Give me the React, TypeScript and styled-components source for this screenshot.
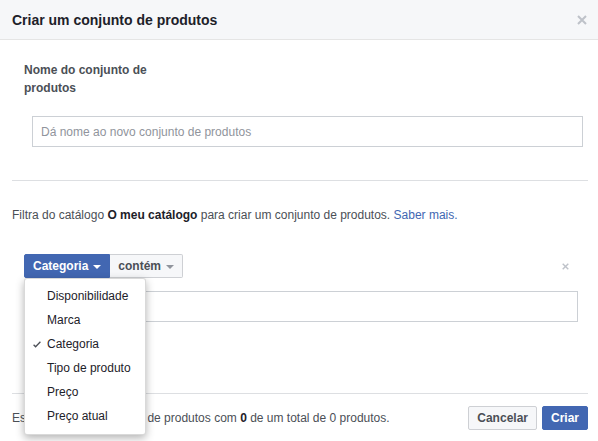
import styled, { createGlobalStyle } from "styled-components";

const Global = createGlobalStyle`
  body {
    margin: 0;
    background: #fff;
    font-family: "Liberation Sans", Arial, Helvetica, sans-serif;
    color: #1d2129;
  }
`;

const Dialog = styled.div`
  width: 598px;
  height: 441px;
  background: #fff;
  overflow: hidden;
`;

const Header = styled.div`
  height: 39px;
  display: flex;
  align-items: center;
  justify-content: space-between;
  padding: 0 11px 0 12px;
  background: #f6f7f9;
  border-bottom: 1px solid #e5e5e5;
`;

const Title = styled.h1`
  margin: 0;
  font-size: 14px;
  font-weight: bold;
  color: #1d2129;
`;

const CloseBtn = styled.button<{ $size: number }>`
  border: 0;
  background: none;
  padding: 0;
  display: flex;
  cursor: pointer;
  color: #bec2c9;
  svg {
    width: ${(p) => p.$size}px;
    height: ${(p) => p.$size}px;
  }
`;

const Content = styled.div`
  padding: 0 10px 0 12px;
`;

const NameBlock = styled.div`
  padding: 21px 0 33px 12px;
  border-bottom: 1px solid #dddfe2;
`;

const Label = styled.label`
  display: block;
  width: 150px;
  font-size: 12px;
  line-height: 18px;
  font-weight: bold;
  color: #4b4f56;
`;

const TextInput = styled.input<{ $indent: number }>`
  display: block;
  box-sizing: border-box;
  height: 31px;
  margin-left: ${(p) => p.$indent}px;
  padding: 0 8px;
  border: 1px solid #ccd0d5;
  font-family: inherit;
  font-size: 12px;
  color: #1d2129;
  outline: none;
  &::placeholder {
    color: #90949c;
  }
`;

const NameInput = styled(TextInput)`
  margin-top: 19px;
  width: 551px;
`;

const FilterBlock = styled.div`
  padding: 26px 0 0;
  height: 213px;
  box-sizing: border-box;
  border-bottom: 1px solid #dddfe2;
`;

const Intro = styled.p`
  margin: 0;
  font-size: 12px;
  line-height: 16px;
  color: #4b4f56;
  b {
    color: #1d2129;
  }
  a {
    color: #4267b2;
    text-decoration: none;
  }
`;

const FilterRow = styled.div`
  margin-top: 31px;
  padding-left: 12px;
  padding-right: 19px;
  display: flex;
  align-items: center;
  justify-content: space-between;
`;

const ButtonGroup = styled.div`
  position: relative;
  display: flex;
`;

const Button = styled.button<{ $primary?: boolean }>`
  box-sizing: border-box;
  height: 24px;
  display: inline-flex;
  align-items: center;
  gap: 5px;
  padding: 0 8px;
  border: 1px solid ${(p) => (p.$primary ? "#4267b2" : "#ced0d4")};
  border-radius: 2px;
  background: ${(p) => (p.$primary ? "#4267b2" : "#f6f7f9")};
  color: ${(p) => (p.$primary ? "#fff" : "#4b4f56")};
  font-family: inherit;
  font-size: 12px;
  font-weight: bold;
  cursor: pointer;
`;

const SegLeft = styled(Button)`
  border-radius: 2px 0 0 2px;
`;

const SegRight = styled(Button)`
  border-left: 0;
  border-radius: 0 2px 2px 0;
`;

const Caret = styled.span<{ $color: string }>`
  width: 0;
  height: 0;
  border-left: 4px solid transparent;
  border-right: 4px solid transparent;
  border-top: 4px solid ${(p) => p.$color};
  margin-top: 1px;
`;

const Menu = styled.ul`
  position: absolute;
  top: 24px;
  left: 0;
  z-index: 10;
  width: 122px;
  box-sizing: border-box;
  margin: 0;
  padding: 5px 0 6px;
  list-style: none;
  background: #fff;
  border: 1px solid rgba(0, 0, 0, 0.15);
  border-radius: 3px;
  box-shadow: 0 3px 8px rgba(0, 0, 0, 0.3);
`;

const MenuItem = styled.li`
  position: relative;
  height: 24px;
  line-height: 24px;
  padding-left: 22px;
  font-size: 12px;
  color: #1d2129;
  white-space: nowrap;
  svg {
    position: absolute;
    left: 8px;
    top: 9px;
  }
`;

const ValueInput = styled(TextInput)`
  margin-top: 13px;
  width: 554px;
`;

const Footer = styled.div`
  display: flex;
  align-items: center;
  justify-content: space-between;
  padding: 12px 10px 0 12px;
`;

const Summary = styled.p`
  margin: 0;
  font-size: 12px;
  color: #4b4f56;
  white-space: nowrap;
  b {
    color: #1d2129;
  }
`;

const Actions = styled.div`
  display: flex;
  gap: 5px;
`;

const XIcon = () => (
  <svg viewBox="0 0 10 10" fill="none" stroke="currentColor" strokeWidth="2">
    <path d="M1 1l8 8M9 1l-8 8" />
  </svg>
);

const Check = () => (
  <svg width="8" height="7" viewBox="0 0 8 7" fill="none" stroke="#4b4f56" strokeWidth="1.3">
    <path d="M0.6 3.8l2 2L7.4 0.8" />
  </svg>
);

const options = [
  "Disponibilidade",
  "Marca",
  "Categoria",
  "Tipo de produto",
  "Preço",
  "Preço atual",
];

export default function App() {
  return (
    <Dialog>
      <Global />
      <Header>
        <Title>Criar um conjunto de produtos</Title>
        <CloseBtn $size={10}>
          <XIcon />
        </CloseBtn>
      </Header>

      <Content>
        <NameBlock>
          <Label htmlFor="setName">Nome do conjunto de produtos</Label>
          <NameInput
            id="setName"
            $indent={8}
            placeholder="Dá nome ao novo conjunto de produtos"
          />
        </NameBlock>

        <FilterBlock>
          <Intro>
            Filtra do catálogo <b>O meu catálogo</b> para criar um conjunto de
            produtos. <a href="#">Saber mais.</a>
          </Intro>

          <FilterRow>
            <ButtonGroup>
              <SegLeft $primary>
                Categoria <Caret $color="#fff" />
              </SegLeft>
              <SegRight>
                contém <Caret $color="#90949c" />
              </SegRight>
              <Menu>
                {options.map((o) => (
                  <MenuItem key={o}>
                    {o === "Categoria" && <Check />}
                    {o}
                  </MenuItem>
                ))}
              </Menu>
            </ButtonGroup>
            <CloseBtn $size={7}>
              <XIcon />
            </CloseBtn>
          </FilterRow>

          <ValueInput $indent={12} />
        </FilterBlock>
      </Content>

      <Footer>
        <Summary>
          Este é um novo conjunto de produtos com <b>0</b> de um total de 0
          produtos.
        </Summary>
        <Actions>
          <Button>Cancelar</Button>
          <Button $primary>Criar</Button>
        </Actions>
      </Footer>
    </Dialog>
  );
}
